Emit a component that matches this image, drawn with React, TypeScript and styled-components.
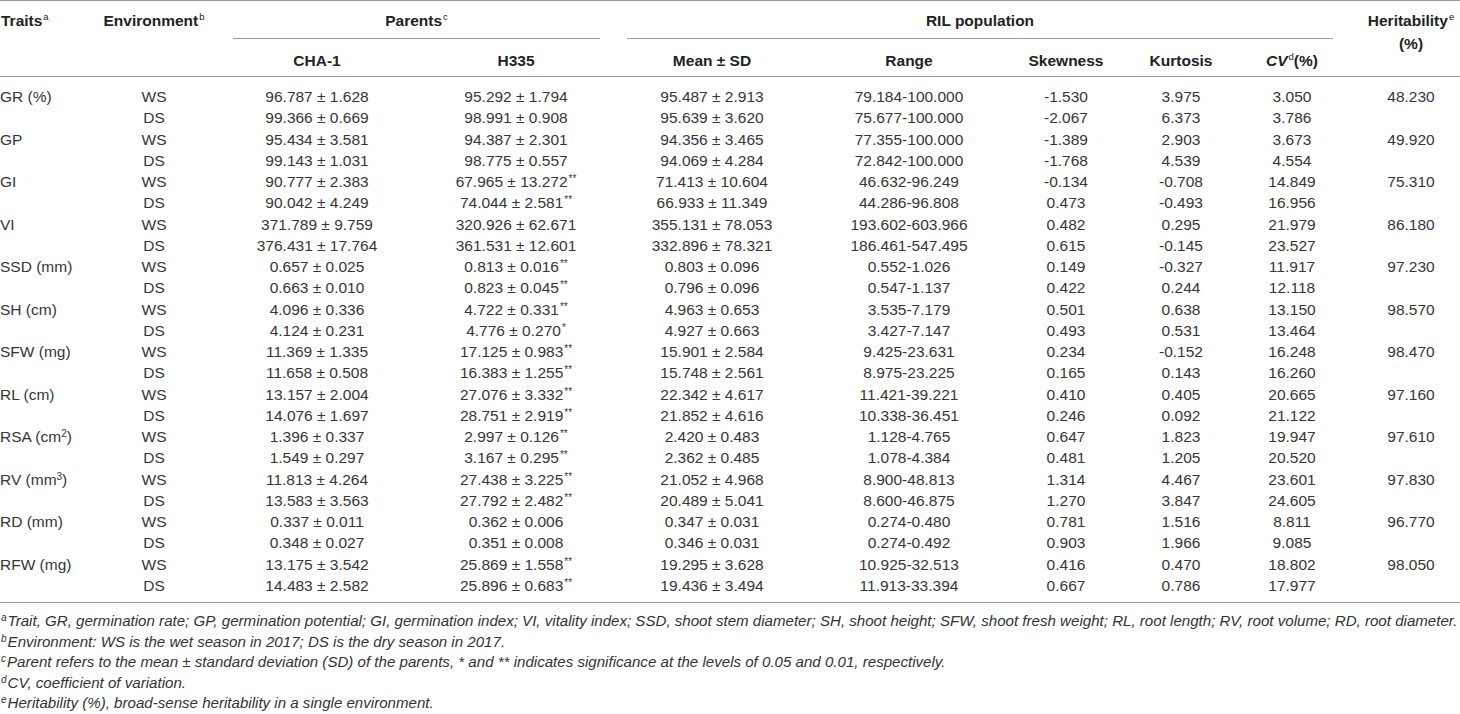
import React from "react";
import styled, { createGlobalStyle } from "styled-components";

const GlobalStyle = createGlobalStyle`
  html, body { margin: 0; padding: 0; background: #ffffff; }
  body { font-family: "Liberation Sans", Arial, Helvetica, sans-serif; color: #333333; }
`;

const COLS = "95px 118px 208px 190px 202px 192px 122px 108px 114px 111px";
const LINE = "#9c9c9c";

const Page = styled.div`
  width: 1460px;
  height: 714px;
  overflow: hidden;
`;

const Header = styled.div`
  display: grid;
  grid-template-columns: ${COLS};
  grid-template-rows: 38px 37px;
  border-top: 1px solid ${LINE};
  border-bottom: 1px solid ${LINE};
  font-weight: 700;
  font-size: 15.5px;
  color: #222222;
`;

const HeadCell = styled.div<{ $col: string; $row: string; $align?: "left" | "center"; $pt?: number; $pl?: number }>`
  grid-column: ${(p) => p.$col};
  grid-row: ${(p) => p.$row};
  text-align: ${(p) => p.$align ?? "center"};
  padding-top: ${(p) => p.$pt ?? 8}px;
  padding-left: ${(p) => p.$pl ?? 0}px;
  line-height: 23px;
  white-space: nowrap;
`;

const SpanHead = styled.div<{ $col: string; $ml: number; $mr: number }>`
  grid-column: ${(p) => p.$col};
  grid-row: 1;
  margin: 0 ${(p) => p.$mr}px 0 ${(p) => p.$ml}px;
  border-bottom: 1px solid ${LINE};
  text-align: center;
  padding-top: 8px;
  line-height: 23px;
  white-space: nowrap;
`;

const Sup = styled.sup`
  font-size: 9.5px;
  font-weight: 400;
  line-height: 0;
  vertical-align: 0;
  position: relative;
  top: -6px;
  margin-left: 1px;
`;

const FootSup = styled.sup`
  font-size: 10px;
  line-height: 0;
  vertical-align: 0;
  position: relative;
  top: -5px;
  margin-right: 1px;
`;

const Body = styled.div`
  padding: 9px 0 6px;
  border-bottom: 1px solid ${LINE};
  font-size: 15.5px;
  color: #363636;
`;

const Row = styled.div`
  display: grid;
  grid-template-columns: ${COLS};
  height: 21.25px;
  line-height: 21.25px;
`;

const Cell = styled.div<{ $align?: "left" | "center"; $pl?: number }>`
  text-align: ${(p) => p.$align ?? "center"};
  padding-left: ${(p) => p.$pl ?? 0}px;
  white-space: nowrap;
`;

const Sig = styled.span`
  font-size: 10px;
  position: relative;
  top: -5px;
  margin-left: 1px;
  line-height: 0;
`;

const Notes = styled.div`
  padding-top: 8px;
  font-style: italic;
  font-size: 15.1px;
  color: #333333;
`;

const Note = styled.div`
  line-height: 20.5px;
  white-space: nowrap;
  padding-left: 1px;
`;

const Unit = styled.sup`
  font-size: 10px;
  line-height: 0;
  vertical-align: 0;
  position: relative;
  top: -5px;
`;

type R = {
  trait?: React.ReactNode;
  env: string;
  cha: string;
  h: string;
  sig?: string;
  mean: string;
  range: string;
  skew: string;
  kurt: string;
  cv: string;
  her?: string;
};

const rows: R[] = [
  { trait: "GR (%)", env: "WS", cha: "96.787 ± 1.628", h: "95.292 ± 1.794", mean: "95.487 ± 2.913", range: "79.184-100.000", skew: "-1.530", kurt: "3.975", cv: "3.050", her: "48.230" },
  { env: "DS", cha: "99.366 ± 0.669", h: "98.991 ± 0.908", mean: "95.639 ± 3.620", range: "75.677-100.000", skew: "-2.067", kurt: "6.373", cv: "3.786" },
  { trait: "GP", env: "WS", cha: "95.434 ± 3.581", h: "94.387 ± 2.301", mean: "94.356 ± 3.465", range: "77.355-100.000", skew: "-1.389", kurt: "2.903", cv: "3.673", her: "49.920" },
  { env: "DS", cha: "99.143 ± 1.031", h: "98.775 ± 0.557", mean: "94.069 ± 4.284", range: "72.842-100.000", skew: "-1.768", kurt: "4.539", cv: "4.554" },
  { trait: "GI", env: "WS", cha: "90.777 ± 2.383", h: "67.965 ± 13.272", sig: "**", mean: "71.413 ± 10.604", range: "46.632-96.249", skew: "-0.134", kurt: "-0.708", cv: "14.849", her: "75.310" },
  { env: "DS", cha: "90.042 ± 4.249", h: "74.044 ± 2.581", sig: "**", mean: "66.933 ± 11.349", range: "44.286-96.808", skew: "0.473", kurt: "-0.493", cv: "16.956" },
  { trait: "VI", env: "WS", cha: "371.789 ± 9.759", h: "320.926 ± 62.671", mean: "355.131 ± 78.053", range: "193.602-603.966", skew: "0.482", kurt: "0.295", cv: "21.979", her: "86.180" },
  { env: "DS", cha: "376.431 ± 17.764", h: "361.531 ± 12.601", mean: "332.896 ± 78.321", range: "186.461-547.495", skew: "0.615", kurt: "-0.145", cv: "23.527" },
  { trait: "SSD (mm)", env: "WS", cha: "0.657 ± 0.025", h: "0.813 ± 0.016", sig: "**", mean: "0.803 ± 0.096", range: "0.552-1.026", skew: "0.149", kurt: "-0.327", cv: "11.917", her: "97.230" },
  { env: "DS", cha: "0.663 ± 0.010", h: "0.823 ± 0.045", sig: "**", mean: "0.796 ± 0.096", range: "0.547-1.137", skew: "0.422", kurt: "0.244", cv: "12.118" },
  { trait: "SH (cm)", env: "WS", cha: "4.096 ± 0.336", h: "4.722 ± 0.331", sig: "**", mean: "4.963 ± 0.653", range: "3.535-7.179", skew: "0.501", kurt: "0.638", cv: "13.150", her: "98.570" },
  { env: "DS", cha: "4.124 ± 0.231", h: "4.776 ± 0.270", sig: "*", mean: "4.927 ± 0.663", range: "3.427-7.147", skew: "0.493", kurt: "0.531", cv: "13.464" },
  { trait: "SFW (mg)", env: "WS", cha: "11.369 ± 1.335", h: "17.125 ± 0.983", sig: "**", mean: "15.901 ± 2.584", range: "9.425-23.631", skew: "0.234", kurt: "-0.152", cv: "16.248", her: "98.470" },
  { env: "DS", cha: "11.658 ± 0.508", h: "16.383 ± 1.255", sig: "**", mean: "15.748 ± 2.561", range: "8.975-23.225", skew: "0.165", kurt: "0.143", cv: "16.260" },
  { trait: "RL (cm)", env: "WS", cha: "13.157 ± 2.004", h: "27.076 ± 3.332", sig: "**", mean: "22.342 ± 4.617", range: "11.421-39.221", skew: "0.410", kurt: "0.405", cv: "20.665", her: "97.160" },
  { env: "DS", cha: "14.076 ± 1.697", h: "28.751 ± 2.919", sig: "**", mean: "21.852 ± 4.616", range: "10.338-36.451", skew: "0.246", kurt: "0.092", cv: "21.122" },
  { trait: <>RSA (cm<Unit>2</Unit>)</>, env: "WS", cha: "1.396 ± 0.337", h: "2.997 ± 0.126", sig: "**", mean: "2.420 ± 0.483", range: "1.128-4.765", skew: "0.647", kurt: "1.823", cv: "19.947", her: "97.610" },
  { env: "DS", cha: "1.549 ± 0.297", h: "3.167 ± 0.295", sig: "**", mean: "2.362 ± 0.485", range: "1.078-4.384", skew: "0.481", kurt: "1.205", cv: "20.520" },
  { trait: <>RV (mm<Unit>3</Unit>)</>, env: "WS", cha: "11.813 ± 4.264", h: "27.438 ± 3.225", sig: "**", mean: "21.052 ± 4.968", range: "8.900-48.813", skew: "1.314", kurt: "4.467", cv: "23.601", her: "97.830" },
  { env: "DS", cha: "13.583 ± 3.563", h: "27.792 ± 2.482", sig: "**", mean: "20.489 ± 5.041", range: "8.600-46.875", skew: "1.270", kurt: "3.847", cv: "24.605" },
  { trait: "RD (mm)", env: "WS", cha: "0.337 ± 0.011", h: "0.362 ± 0.006", mean: "0.347 ± 0.031", range: "0.274-0.480", skew: "0.781", kurt: "1.516", cv: "8.811", her: "96.770" },
  { env: "DS", cha: "0.348 ± 0.027", h: "0.351 ± 0.008", mean: "0.346 ± 0.031", range: "0.274-0.492", skew: "0.903", kurt: "1.966", cv: "9.085" },
  { trait: "RFW (mg)", env: "WS", cha: "13.175 ± 3.542", h: "25.869 ± 1.558", sig: "**", mean: "19.295 ± 3.628", range: "10.925-32.513", skew: "0.416", kurt: "0.470", cv: "18.802", her: "98.050" },
  { env: "DS", cha: "14.483 ± 2.582", h: "25.896 ± 0.683", sig: "**", mean: "19.436 ± 3.494", range: "11.913-33.394", skew: "0.667", kurt: "0.786", cv: "17.977" },
];

export default function App() {
  return (
    <Page>
      <GlobalStyle />
      <Header>
        <HeadCell $col="1" $row="1" $align="left" $pl={1}>
          Traits<Sup>a</Sup>
        </HeadCell>
        <HeadCell $col="2" $row="1">
          Environment<Sup>b</Sup>
        </HeadCell>
        <SpanHead $col="3 / 5" $ml={20} $mr={11}>
          Parents<Sup>c</Sup>
        </SpanHead>
        <SpanHead $col="5 / 10" $ml={16} $mr={16}>
          RIL population
        </SpanHead>
        <HeadCell $col="10" $row="1 / 3" $pl={13}>
          Heritability<Sup>e</Sup>
          <br />
          (%)
        </HeadCell>
        <HeadCell $col="3" $row="2" $pt={10}>CHA-1</HeadCell>
        <HeadCell $col="4" $row="2" $pt={10}>H335</HeadCell>
        <HeadCell $col="5" $row="2" $pt={10}>Mean ± SD</HeadCell>
        <HeadCell $col="6" $row="2" $pt={10}>Range</HeadCell>
        <HeadCell $col="7" $row="2" $pt={10}>Skewness</HeadCell>
        <HeadCell $col="8" $row="2" $pt={10}>Kurtosis</HeadCell>
        <HeadCell $col="9" $row="2" $pt={10}>
          <i>CV</i>
          <Sup>d</Sup>(%)
        </HeadCell>
      </Header>
      <Body>
        {rows.map((r, i) => (
          <Row key={i}>
            <Cell $align="left">{r.trait ?? ""}</Cell>
            <Cell>{r.env}</Cell>
            <Cell>{r.cha}</Cell>
            <Cell>
              {r.h}
              {r.sig && <Sig>{r.sig}</Sig>}
            </Cell>
            <Cell>{r.mean}</Cell>
            <Cell>{r.range}</Cell>
            <Cell>{r.skew}</Cell>
            <Cell>{r.kurt}</Cell>
            <Cell>{r.cv}</Cell>
            <Cell $pl={13}>{r.her ?? ""}</Cell>
          </Row>
        ))}
      </Body>
      <Notes>
        <Note>
          <FootSup>a</FootSup>Trait, GR, germination rate; GP, germination potential; GI, germination index; VI, vitality index; SSD, shoot stem diameter; SH, shoot height; SFW, shoot fresh weight; RL, root length; RV, root volume; RD, root diameter.
        </Note>
        <Note>
          <FootSup>b</FootSup>Environment: WS is the wet season in 2017; DS is the dry season in 2017.
        </Note>
        <Note>
          <FootSup>c</FootSup>Parent refers to the mean ± standard deviation (SD) of the parents, * and ** indicates significance at the levels of 0.05 and 0.01, respectively.
        </Note>
        <Note>
          <FootSup>d</FootSup>CV, coefficient of variation.
        </Note>
        <Note>
          <FootSup>e</FootSup>Heritability (%), broad-sense heritability in a single environment.
        </Note>
      </Notes>
    </Page>
  );
}
